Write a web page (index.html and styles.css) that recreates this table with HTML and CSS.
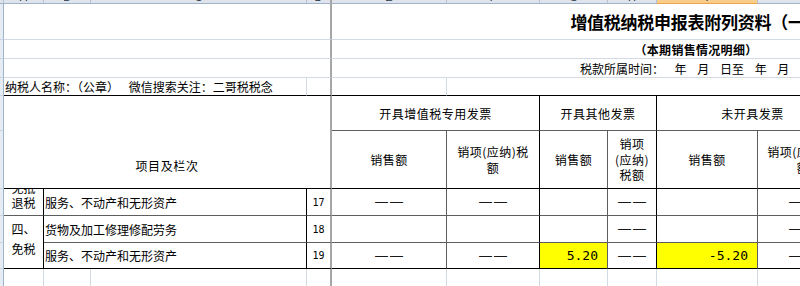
FILE: index.html
```html
<!DOCTYPE html>
<html lang="zh-CN">
<head>
<meta charset="utf-8">
<title>增值税纳税申报表附列资料（一）</title>
<link rel="stylesheet" href="styles.css">
</head>
<body>
<div class="sheet">
  <div class="hd"></div>
  <div class="hd"><span>A</span></div>
  <div class="hd"><span>B</span></div>
  <div class="hd"><span>C</span></div>
  <div class="hd rf"><span>D</span></div>
  <div class="hd"><span>E</span></div>
  <div class="hd"><span>F</span></div>
  <div class="hd"><span>G</span></div>
  <div class="hd"><span>H</span></div>
  <div class="hd sel"><span>I</span></div>
  <div class="hd"><span>J</span></div>
  <div class="hd"><span>K</span></div>

  <div class="rs"></div>
  <div class="s4 rf"></div>
  <div class="s7 ctr title">增值税纳税申报表附列资料（一）</div>

  <div class="rs"></div>
  <div class="s4 rf"></div>
  <div class="s7 ctr sub">（本期销售情况明细）</div>

  <div class="rs"></div>
  <div class="s4 rf"></div>
  <div class="s7 ctr period">税款所属时间： 年 月 日至 年 月 日</div>

  <div class="rs"></div>
  <div class="s3 bk payer">纳税人名称：（公章） 微信搜索关注：二哥税税念</div>
  <div class="rf bk"></div>
  <div class="bk"></div>
  <div class="s6 bk"></div>

  <div class="rs"></div>
  <div class="s4 r2 rf bk ctr item">项目及栏次</div>
  <div class="s2 rk bd ctr th">开具增值税专用发票</div>
  <div class="s2 rk bd ctr th">开具其他发票</div>
  <div class="s2 rk bd ctr th">未开具发票</div>
  <div></div>

  <div class="rs"></div>
  <div class="rd bk ctr th">销售额</div>
  <div class="rk bk ctr th wrap">销项(应纳)税<br>额</div>
  <div class="rd bk ctr th">销售额</div>
  <div class="rk bk ctr th wrap">销项<br>(应纳)<br>税额</div>
  <div class="rd bk ctr th">销售额</div>
  <div class="rk bk ctr th wrap">销项(应纳)税<br>额</div>
  <div></div>

  <div class="rs"></div>
  <div class="rk bd ctr grp grp-top">免抵<br>退税</div>
  <div class="s2 rk bd lab">服务、不动产和无形资产</div>
  <div class="rf bd ctr num">17</div>
  <div class="rd bd ctr dash">——</div>
  <div class="rk bd ctr dash">——</div>
  <div class="rd bd"></div>
  <div class="rk bd ctr dash">——</div>
  <div class="rd bd"></div>
  <div class="rk bd ctr dash">——</div>
  <div></div>

  <div class="rs"></div>
  <div class="r2 rk bk ctr grp grp-mid">四、<br>免税</div>
  <div class="s2 rk bd lab">货物及加工修理修配劳务</div>
  <div class="rf bd ctr num">18</div>
  <div class="rd bd"></div>
  <div class="rk bd"></div>
  <div class="rd bd"></div>
  <div class="rk bd ctr dash">——</div>
  <div class="rd bd"></div>
  <div class="rk bd ctr dash">——</div>
  <div></div>

  <div class="rs"></div>
  <div class="s2 rk bk lab">服务、不动产和无形资产</div>
  <div class="rf bk ctr num">19</div>
  <div class="rd bk ctr dash">——</div>
  <div class="rk bk ctr dash">——</div>
  <div class="rd bk amt hl">5.20</div>
  <div class="rk bk ctr dash">——</div>
  <div class="rd bk amt hl">-5.20</div>
  <div class="rk bk ctr dash">——</div>
  <div></div>

  <div class="rs"></div>
  <div></div>
  <div></div>
  <div></div>
  <div class="rf"></div>
  <div></div>
  <div></div>
  <div></div>
  <div></div>
  <div></div>
  <div></div>
  <div></div>
</div>
</body>
</html>
```

FILE: styles.css
```css
html, body {
  margin: 0;
  padding: 0;
  background: #ffffff;
}
body {
  width: 800px;
  height: 286px;
  overflow: hidden;
  font-family: "Noto Sans CJK SC", "Noto Sans", sans-serif;
  font-size: 12px;
  color: #000000;
}
.sheet {
  display: grid;
  width: max-content;
  grid-template-columns: 4px 40px 47px 216px 25px 115px 93px 68px 49px 101px 91px 212px;
  grid-template-rows: 4px 36px 19px 19px 18px 35px 58px 27px 27px 26px 19px;
}
.sheet > div {
  box-sizing: border-box;
  border-right: 1px solid #d4dae4;
  border-bottom: 1px solid #d4dae4;
  display: flex;
  align-items: center;
  overflow: hidden;
  white-space: nowrap;
  min-width: 0;
  min-height: 0;
  line-height: 15px;
}
/* spans */
.sheet .s2 { grid-column: span 2; }
.sheet .s3 { grid-column: span 3; }
.sheet .s4 { grid-column: span 4; }
.sheet .s6 { grid-column: span 6; }
.sheet .s7 { grid-column: span 7; }
.sheet .r2 { grid-row: span 2; }
/* borders */
.sheet .rk { border-right-color: #000000; }
.sheet .rd { border-right-color: #5e5e5e; }
.sheet .rf { border-right: 2px solid #a6a6a6; }
.sheet .bk { border-bottom-color: #000000; }
.sheet .bd { border-bottom-color: #5e5e5e; }
/* header strips */
.sheet .hd {
  background: #dfe4ec;
  border-right-color: #b3c1d2;
  border-bottom-color: #9fb3ca;
  justify-content: center;
  align-items: flex-end;
}
.sheet .hd.rf { border-right: 2px solid #a6a6a6; }
.sheet .hd.sel {
  background: #f8cd8c;
  border-bottom-color: #eea54a;
}
.hd span {
  font-family: "Liberation Sans", sans-serif;
  font-size: 11px;
  line-height: 11px;
  color: #26364a;
}
.sheet .rs {
  background: #e6ecf4;
  border-right-color: #9fb3ca;
  border-bottom-color: #c7d3e1;
}
/* alignment */
.sheet .ctr { justify-content: center; text-align: center; }
/* texts */
.title {
  font-size: 17px;
  font-weight: 700;
  letter-spacing: -0.25px;
}
.sub {
  font-weight: 700;
  letter-spacing: 0.3px;
}
.period {
  white-space: pre;
  word-spacing: 8px;
}
.sheet .payer {
  padding-left: 1px;
  white-space: pre;
  word-spacing: 7px;
}
.th { letter-spacing: 0.5px; }
.sheet .wrap { line-height: 15.5px; white-space: nowrap; }
.sheet .item {
  align-items: flex-end;
  padding-bottom: 15px;
  letter-spacing: 0.6px;
}
.sheet .lab { padding-left: 1px; }
.sheet .grp { line-height: 20px; }
.sheet .grp-top {
  align-items: flex-end;
  line-height: 15px;
  padding-bottom: 5px;
}
.sheet .grp-mid { padding-bottom: 6px; }
.num {
  font-family: "DejaVu Sans Mono", monospace;
  font-size: 10px;
}
.sheet .dash {
  font-family: "Liberation Sans", sans-serif;
  font-size: 13px;
  letter-spacing: 2px;
  padding-left: 2px;
  padding-bottom: 1px;
  color: #1a1a1a;
}
.sheet .amt {
  justify-content: flex-end;
  padding-right: 9px;
  font-family: "DejaVu Sans Mono", monospace;
  font-size: 13px;
}
.sheet .hl { background: #ffff00; }
```
